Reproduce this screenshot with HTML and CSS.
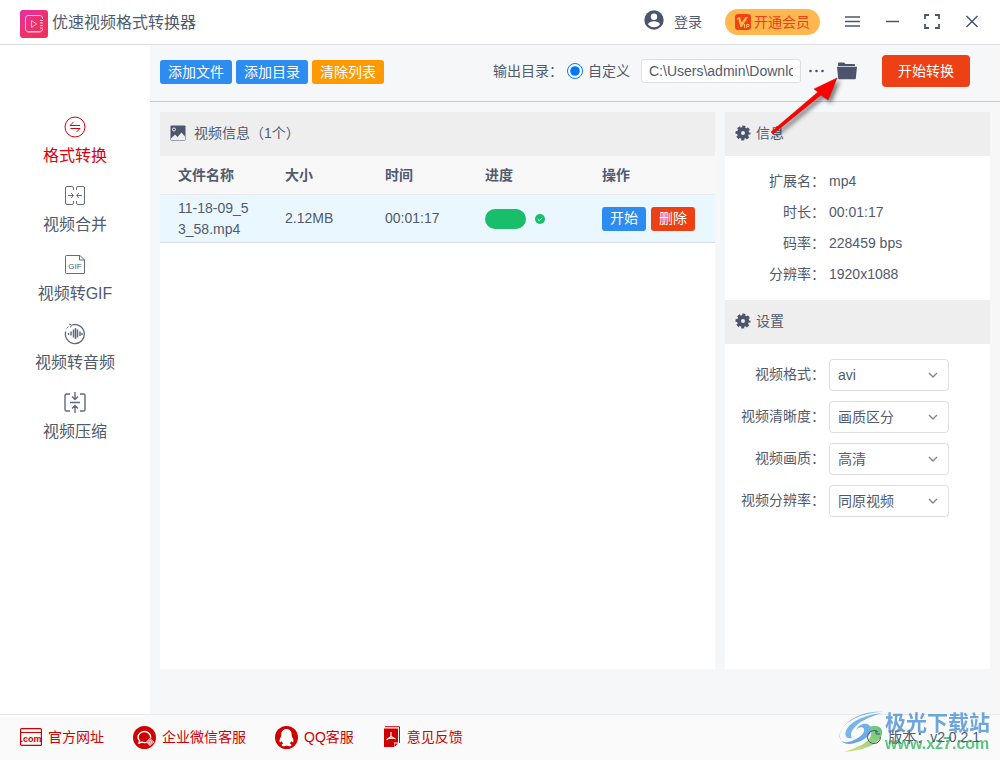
FILE: index.html
```html
<!DOCTYPE html>
<html lang="zh-CN">
<head>
<meta charset="utf-8">
<title>优速视频格式转换器</title>
<link rel="stylesheet" href="styles.css">
</head>
<body>
<div class="app">
  <header class="titlebar">
    <svg class="logo" viewBox="0 0 28 28">
      <defs><linearGradient id="logo-fill" x1="0" y1="0" x2="0.8" y2="1"><stop offset="0" stop-color="#ea2fa6"/><stop offset="0.6" stop-color="#ee3068"/><stop offset="1" stop-color="#ef315c"/></linearGradient></defs>
      <rect width="28" height="28" rx="3" fill="url(#logo-fill)"/>
      <path d="M22.500 9V8a2.500 2.500 0 0 0-2.500-2.500H8A2.500 2.500 0 0 0 5.500 8v11A2.500 2.500 0 0 0 8 21.500h12a2.500 2.500 0 0 0 2.500-2.500M20 10.500h3M20 13h3M20 15.500h3M20 18h3" fill="none" stroke="#ffc2df"/>
      <path d="M7.500 22.500h13" stroke="#f77cac"/>
      <path d="M11.500 10.500v7l5-3.500z" fill="none" stroke="#ffc2df" stroke-linejoin="round"/>
    </svg>
    <h1 class="title">优速视频格式转换器</h1>
    <button class="login" type="button">
      <svg width="20" height="20" viewBox="0 0 20 20"><circle cx="10" cy="10" r="9.700" fill="#4d556d"/><circle cx="10" cy="6.800" r="3.200" fill="#fff"/><path d="M4 14.200c1-2.200 3.300-3 6-3s5 .8 6 3c-1.300 2-3.500 3-6 3s-4.700-1-6-3z" fill="#fff"/></svg>
      <span>登录</span>
    </button>
    <button class="vip" type="button">
      <svg width="17" height="17" viewBox="0 0 17 17"><rect width="16" height="16" rx="3" fill="#f04214"/><path d="M2 4l3-1 1.500 5.500L10.500 3H13L7 13H5.200L3.500 5.500 2 5.500z" fill="#ffb84f"/><path d="M9.500 10v4M11.500 14v-3.500H14v1.800h-2" stroke="#ffb84f" fill="none"/></svg>
      <span>开通会员</span>
    </button>
    <div class="window-tools">
      <button type="button" aria-label="菜单"><svg viewBox="0 0 16 16"><path d="M1 3h15M1 7.500h15M1 12h15" stroke="#4d556d" stroke-width="1.500"/></svg></button>
      <button type="button" aria-label="最小化"><svg viewBox="0 0 16 16"><path d="M2 7.500h13" stroke="#4d556d" stroke-width="1.500"/></svg></button>
      <button type="button" aria-label="最大化"><svg viewBox="0 0 16 16"><path d="M1 5V1h4M11 1h4v4M15 10v4h-4M5 14H1v-4" fill="none" stroke="#4d556d" stroke-width="1.800"/></svg></button>
      <button type="button" aria-label="关闭"><svg viewBox="0 0 16 16"><path d="M2.500 2l11 11M13.500 2l-11 11" stroke="#4d556d" stroke-width="1.500"/></svg></button>
    </div>
  </header>

  <div class="workspace">
    <nav class="sidebar">
      <a class="nav-item active" href="#">
        <svg viewBox="0 0 22 22"><circle cx="11" cy="11" r="10"/><path d="M6 9.500h10M6 9.500L9.500 6M16 12.500H6.500M16 12.500L12.500 16"/></svg>
        格式转换</a>
      <a class="nav-item" href="#">
        <svg viewBox="0 0 22 22"><path d="M9.500 5V3q0-1.500-1.500-1.500H3Q1.500 1.500 1.500 3v15q0 1.500 1.500 1.500h5q1.500 0 1.500-1.500v-2M12.500 5V3q0-1.500 1.500-1.500h5q1.500 0 1.500 1.500v15q0 1.500-1.500 1.500h-5q-1.500 0-1.500-1.500v-2M4 10.500h5M7 8l2.500 2.500L7 13M18 10.500h-5M15 8l-2.500 2.500L15 13"/></svg>
        视频合并</a>
      <a class="nav-item" href="#">
        <svg viewBox="0 0 22 22"><path d="M2.500 1.500H16l4.500 4.500v13q0 .5-.5 .5H2.500q-1 0-1-1v-16q0-1 1-1zM15.500 1.500V6h5"/><text x="11" y="15" class="gif-mark">GIF</text></svg>
        视频转GIF</a>
      <a class="nav-item" href="#">
        <svg viewBox="0 0 22 22"><path d="M8 2A9.500 9.500 0 1 1 1.700 8.500" stroke-width="1.300"/><path d="M5 1l2.500 1L6.500 4.500M2.500 5.500l2-2"/><path d="M4.500 10v2M7 8.500v4M9.500 6.500v8M11.500 5v11M13.500 6.500v8M16 8.500v4.500M18 10v2" stroke-width="1.500"/></svg>
        视频转音频</a>
      <a class="nav-item" href="#">
        <svg viewBox="0 0 22 22"><path d="M6 2H2.500Q1 2 1 3.500v14Q1 19 2.500 19H6M16 2h3.500Q21 2 21 3.500v14q0 1.500-1.500 1.500H16M6 10.500h10M11 0v7M8 4.500l3 3 3-3M11 21v-7M8 16.500l3-3 3 3" stroke-width="1.400"/></svg>
        视频压缩</a>
    </nav>

    <div class="content">
      <div class="toolbar">
        <div class="actions">
          <button class="btn blue" type="button">添加文件</button>
          <button class="btn blue" type="button">添加目录</button>
          <button class="btn orange" type="button">清除列表</button>
        </div>
        <div class="output">
          <span>输出目录：</span>
          <input class="radio" type="radio" id="custom-dir" name="dir" checked>
          <label class="radio-label" for="custom-dir">自定义</label>
          <input class="path" type="text" aria-label="输出目录" value="C:\Users\admin\Downloads">
          <button class="icon-btn" type="button" aria-label="浏览"><svg width="16" height="16" viewBox="0 0 16 16" fill="#4d556d"><circle cx="1.500" cy="8" r="1.300"/><circle cx="7.500" cy="8" r="1.300"/><circle cx="13.500" cy="8" r="1.300"/></svg></button>
          <button class="icon-btn folder" type="button" aria-label="打开文件夹"><svg width="20" height="18" viewBox="0 0 20 18"><path d="M1 4V1.500Q1 .5 2 .5h5l1.500 1.500H17q1 0 1 1v1z" fill="#4d556d"/><path d="M0 4.800h20L18.800 16.500q0 .8-.8 .8H2q-.8 0-.8-.8z" fill="#4d556d"/></svg></button>
          <button class="start" type="button">开始转换</button>
        </div>
      </div>

      <div class="panels">
        <section class="panel files">
          <h2 class="panel-head">
            <svg width="16" height="16" viewBox="0 0 16 16"><rect x="0.500" y="0.500" width="15" height="15" rx="1" fill="#4d556d"/><circle cx="4" cy="4.500" r="1.500" fill="none" stroke="#eee"/><path d="M1 13.500l4-4 2.500 2.500L11.500 7.500l3.500 4V15H1z" fill="#eee"/></svg>
            <span>视频信息（1个）</span></h2>
          <table class="file-table">
            <colgroup><col class="c-name"><col class="c-size"><col class="c-time"><col class="c-progress"><col class="c-action"></colgroup>
            <thead><tr><th>文件名称</th><th>大小</th><th>时间</th><th>进度</th><th>操作</th></tr></thead>
            <tbody><tr>
              <td>11-18-09_53_58.mp4</td><td>2.12MB</td><td>00:01:17</td>
              <td><div class="progress"><span class="bar"></span><svg width="10" height="10" viewBox="0 0 10 10"><circle cx="5" cy="5" r="5" fill="#19be6b"/><path d="M2.700 5.200l1.600 1.500 3-3" fill="none" stroke="#d4f5e3"/></svg></div></td>
              <td><div class="row-actions"><button class="btn blue" type="button">开始</button><button class="btn red" type="button">删除</button></div></td>
            </tr></tbody>
          </table>
        </section>

        <aside class="panel details">
          <h2 class="panel-head gear-head">
            <svg width="16" height="16" viewBox="0 0 16 16"><circle cx="8" cy="8" r="4" fill="none" stroke="#4d556d" stroke-width="4"/><circle cx="8" cy="8" r="6.200" fill="none" stroke="#4d556d" stroke-width="2.600" stroke-dasharray="2.900 1.970" stroke-dashoffset="1.450"/></svg>
            <span>信息</span></h2>
          <dl class="info">
            <dt>扩展名：</dt><dd>mp4</dd>
            <dt>时长：</dt><dd>00:01:17</dd>
            <dt>码率：</dt><dd>228459 bps</dd>
            <dt>分辨率：</dt><dd>1920x1088</dd>
          </dl>
          <h2 class="panel-head gear-head">
            <svg width="16" height="16" viewBox="0 0 16 16"><circle cx="8" cy="8" r="4" fill="none" stroke="#4d556d" stroke-width="4"/><circle cx="8" cy="8" r="6.200" fill="none" stroke="#4d556d" stroke-width="2.600" stroke-dasharray="2.900 1.970" stroke-dashoffset="1.450"/></svg>
            <span>设置</span></h2>
          <form class="settings">
            <label for="format">视频格式：</label>
            <div class="select"><select id="format"><option>avi</option></select><svg viewBox="0 0 10 10"><path d="M1 3l4 4 4-4"/></svg></div>
            <label for="clarity">视频清晰度：</label>
            <div class="select"><select id="clarity"><option>画质区分</option></select><svg viewBox="0 0 10 10"><path d="M1 3l4 4 4-4"/></svg></div>
            <label for="quality">视频画质：</label>
            <div class="select"><select id="quality"><option>高清</option></select><svg viewBox="0 0 10 10"><path d="M1 3l4 4 4-4"/></svg></div>
            <label for="resolution">视频分辨率：</label>
            <div class="select"><select id="resolution"><option>同原视频</option></select><svg viewBox="0 0 10 10"><path d="M1 3l4 4 4-4"/></svg></div>
          </form>
        </aside>
      </div>
    </div>
  </div>

  <footer class="footer">
    <a href="#"><svg width="22" height="18" viewBox="0 0 22 18"><rect x="0.600" y="0.600" width="20.800" height="16.800" rx="1" fill="none" stroke="#d00000" stroke-width="1.200"/><path d="M1 4.500h20" stroke="#d00000"/><text x="11" y="14" class="com-mark">.com</text></svg>官方网址</a>
    <a href="#"><svg width="23" height="23" viewBox="0 0 23 23"><circle cx="11.500" cy="11.500" r="11.500" fill="#d00000"/><path d="M13.500 16.300q-2.500.7-4.800-.1L6 17.200l.6-2.500a6.300 5.500 0 1 1 11-3" fill="none" stroke="#fff" stroke-width="1.400"/><g fill="none" stroke="#fff"><circle cx="17" cy="13.800" r="1.200"/><circle cx="15" cy="16" r="1.200"/><circle cx="19.200" cy="16" r="1.200"/><circle cx="17" cy="18" r="1.200"/></g></svg>企业微信客服</a>
    <a href="#"><svg width="23" height="23" viewBox="0 0 23 23"><circle cx="11.500" cy="11.500" r="11.500" fill="#d00000"/><path d="M11.500 3C8 3 6.300 5.500 6.300 9c0 1-.3 1.700-1 3-.9 1.700-1 3.500-.5 4.200.4.500 1.200-.4 1.800-1.200.3 1 .8 1.800 1.500 2.500-1 .5-1.500 1-1.500 1.700 0 1.300 3.500 1.200 4.900.2 1.400 1 4.900 1.100 4.900-.2 0-.7-.5-1.200-1.500-1.700.7-.7 1.200-1.500 1.500-2.500.6.800 1.400 1.700 1.800 1.200.5-.7.400-2.500-.5-4.200-.7-1.300-1-2-1-3C16.700 5.500 15 3 11.500 3z" fill="#fff"/></svg>QQ客服</a>
    <a href="#"><svg width="18" height="22" viewBox="0 0 18 22"><path d="M2 .7h14.500V17" fill="none" stroke="#d00000"/><path d="M1 2.500h14v14h-4v4.500H1z" fill="#d00000"/><path d="M15 17.500l-3.500 3.500v-3.500z" fill="#d00000"/><path d="M8 6v4.500L3.500 14M8 10.500l4.500 2.500M5.500 12.500l5-.5" fill="none" stroke="#fff" stroke-width="1.200"/></svg>意见反馈</a>
    <div class="version"><svg width="16" height="16" viewBox="0 0 16 16"><path d="M12 3A6.500 6.500 0 1 0 14.500 8" fill="none" stroke="#4d556d"/><path d="M10 1v4h4" fill="none" stroke="#4d556d"/></svg><span>版本：v2.0.2.1</span></div>
  </footer>

  <svg class="pointer" width="80" height="68" viewBox="0 0 80 68" aria-hidden="true">
    <path d="M13 59L60 19 56 16 79 5 70 27 63 22 15 61z" fill="#ff0000" stroke="#d00000" stroke-width="0.500"/>
  </svg>

  <div class="watermark" aria-hidden="true">
    <svg width="46" height="42" viewBox="0 0 46 42">
      <defs>
        <linearGradient id="wm-blue" x1="0" y1="1" x2="1" y2="0"><stop offset="0" stop-color="#4c8fd5"/><stop offset="1" stop-color="#62b5ec"/></linearGradient>
        <linearGradient id="wm-green" x1="0" y1="1" x2="1" y2="0"><stop offset="0" stop-color="#d8e36b"/><stop offset="1" stop-color="#43b96a"/></linearGradient>
      </defs>
      <path d="M44 1C27 1 5 9 1 22c-2 8 4 11 12 8 8-3 13-8 12-12-1-3-6-2-8 1 2-5 9-8 13-5 6 5-1 14-11 17C9 35 0 33 1 23 4 10 24-1 44 1z" fill="url(#wm-blue)"/>
      <path d="M7 20C11 10 26 4 43 2 31 6 21 10 16 16c-4 4-5 8-3 11-5 1-8-2-6-7z" fill="#61a8e4"/>
      <path d="M30 16c10-3 16 2 12 10C37 35 21 40 5 41c10-4 21-7 25-13 3-4 3-8 0-12z" fill="url(#wm-green)"/>
    </svg>
    <div class="watermark-text"><span class="wm-name">极光下载站</span><span class="wm-url">www.xz7.com</span></div>
  </div>
</div>
</body>
</html>
```
FILE: styles.css
```css
* { box-sizing: border-box; }
body {
  margin: 0;
  color: #515a6e;
  background: #f5f7f9;
  font: 14px/20px "Liberation Sans", "Noto Sans CJK SC", sans-serif;
}
button, input, select { font: inherit; color: inherit; }
button { padding: 0; border: 0; background: none; cursor: pointer; }
a { color: inherit; text-decoration: none; }
svg { display: block; flex: none; }
h1, h2, dl, dd { margin: 0; font-weight: 400; }

.app { position: relative; display: flex; flex-direction: column; min-height: 100vh; }

.titlebar {
  display: flex;
  align-items: center;
  height: 45px;
  padding: 0 20px;
  background: #fff;
  border-bottom: 1px solid #dcdee2;
}
.logo { width: 28px; height: 28px; margin: 4px 4px 0 0; }
.title { flex: 1; font-size: 16px; line-height: 26px; padding-top: 2px; }
.login { display: flex; align-items: center; gap: 10px; margin-right: 23px; }
.login svg { margin-bottom: 5px; }
.vip {
  display: flex;
  align-items: center;
  gap: 2px;
  height: 26px;
  margin-right: 24px;
  padding: 0 10px;
  border-radius: 13px;
  color: #ed4014;
  background: #ffb850;
}
.window-tools { display: flex; gap: 24px; }
.window-tools svg { width: 16px; height: 16px; }

.workspace { display: flex; flex: 1; }
.sidebar { flex: 0 0 150px; padding-top: 71px; background: #fff; }
.nav-item {
  display: flex;
  flex-direction: column;
  align-items: center;
  gap: 6px;
  height: 69px;
  font-size: 16px;
  line-height: 24px;
}
.nav-item svg { width: 22px; height: 22px; fill: none; stroke: #616a7e; }
.nav-item.active { color: #d9000f; }
.nav-item.active svg { stroke: #d9000f; }
.gif-mark { font-size: 8px; text-anchor: middle; fill: #515a6e; stroke: none; }

.content { display: flex; flex: 1; flex-direction: column; min-width: 0; }
.toolbar {
  display: flex;
  align-items: center;
  justify-content: space-between;
  height: 57px;
  padding: 0 30px 4px 10px;
  border-bottom: 1px solid #c5c8ce;
}
.actions { display: flex; gap: 4px; padding-top: 2px; }
.btn { height: 24px; padding: 0 8px; border-radius: 3px; color: #fff; white-space: nowrap; }
.blue { background: #2d8cf0; }
.orange { background: #ff9900; }
.red { background: #ed4014; }
.output { display: flex; align-items: center; }
.radio { width: 16px; height: 16px; margin: 0 5px 0 4px; accent-color: #0075ff; }
.radio-label { margin-right: 11px; }
.path {
  width: 160px;
  height: 24px;
  padding: 0 7px;
  border: 1px solid #dcdee2;
  border-radius: 3px;
  background: #fff;
}
.icon-btn { margin-left: 8px; }
.folder { margin: 0 25px 0 12px; }
.start { width: 88px; height: 32px; border-radius: 4px; color: #fff; background: #ed4014; }

.panels { display: flex; flex: 1; gap: 10px; padding: 10px 10px 45px; }
.panel { background: #fff; }
.files { flex: 1; }
.details { flex: 0 0 265px; }
.panel-head {
  display: flex;
  align-items: center;
  gap: 8px;
  height: 44px;
  padding: 0 10px 2px;
  font-size: 14px;
  background: #eee;
}
.gear-head { gap: 5px; }

.file-table { width: 100%; border-spacing: 0; table-layout: fixed; }
.c-name { width: 107px; }
.c-size, .c-time { width: 100px; }
.c-progress { width: 117px; }
.file-table th, .file-table td { padding: 2px 0 2px 18px; text-align: left; line-height: 21px; }
.file-table th { height: 39px; font-weight: 600; background: #f8f8f9; border-bottom: 1px solid #e8eaec; }
.file-table td { height: 48px; background: #ebf7ff; border-bottom: 1px solid #dcdee2; word-break: break-all; }
.file-table td:first-child { padding-right: 15px; }
.progress { display: flex; align-items: center; gap: 9px; }
.bar { width: 41px; height: 20px; border-radius: 10px; background: #19be6b; }
.row-actions { display: flex; gap: 5px; }

.info { display: grid; grid-template-columns: 100px 1fr; column-gap: 4px; padding: 10px 0; line-height: 31px; }
.info dt { text-align: right; }
.settings { display: grid; grid-template-columns: 100px 120px; gap: 10px 4px; padding: 15px 0; }
.settings label { text-align: right; line-height: 30px; }
.select { position: relative; }
.select select {
  display: block;
  width: 100%;
  height: 32px;
  padding: 0 8px;
  border: 1px solid #dcdee2;
  border-radius: 4px;
  background: #fff;
  appearance: none;
}
.select svg { position: absolute; top: 11px; right: 11px; width: 10px; height: 10px; fill: none; stroke: #808695; stroke-width: 1.4; pointer-events: none; }

.footer {
  display: flex;
  align-items: center;
  gap: 29px;
  height: 46px;
  padding: 0 20px 1px;
  color: #d00000;
  background: #fafafa;
  border-top: 1px solid #e8eaec;
}
.footer a { display: flex; align-items: center; gap: 6px; }
.com-mark { font-size: 9px; font-weight: 700; text-anchor: middle; fill: #d00000; }
.version { position: relative; z-index: 1; display: flex; align-items: center; gap: 6px; margin-left: auto; color: #515a6e; }

.pointer { position: absolute; top: 73px; right: 162px; filter: drop-shadow(3px 3px 2px rgba(0, 0, 0, 0.5)); pointer-events: none; }
.watermark { position: absolute; right: 10px; bottom: 7px; display: flex; align-items: center; opacity: 0.85; pointer-events: none; }
.watermark-text { display: flex; flex-direction: column; }
.wm-name { color: #5597d8; font-size: 21px; font-weight: 700; line-height: 24px; }
.wm-url { color: #42bd6c; font-size: 16px; font-weight: 700; line-height: 18px; }
```
